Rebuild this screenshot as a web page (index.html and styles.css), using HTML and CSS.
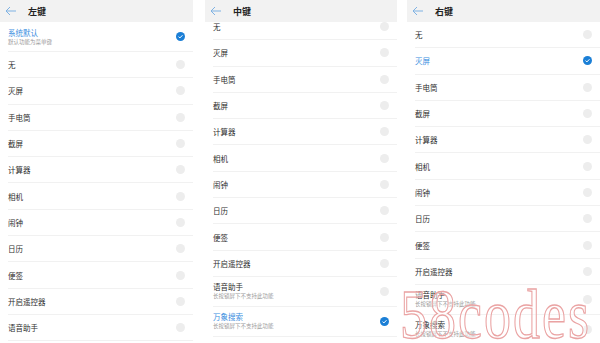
FILE: index.html
```html
<!DOCTYPE html>
<html lang="zh-CN">
  <head>
    <meta charset="UTF-8" />
    <meta name="viewport" content="width=device-width, initial-scale=1.0" />
    <title>按键设置</title>
    <link rel="stylesheet" href="styles.css">
  </head>
  <body>
    <div class="screens">
      <!-- 左键 -->
      <div class="panel panel-left">
        <div class="header">
          <svg class="back" viewBox="0 0 12 10" width="12" height="10">
            <path d="M11 5H1.5M5 1L1 5l4 4" fill="none" stroke="#7fb2e3" stroke-width="1" />
          </svg>
          <span class="title">左键</span>
        </div>
        <div class="list">
          <div class="row row-double">
            <div class="label">
              <span class="name selected">系统默认</span>
              <span class="desc">默认功能为菜单键</span>
            </div>
            <svg class="check" viewBox="0 0 10 10" width="9" height="9">
              <circle cx="5" cy="5" r="5" fill="#1b7fd6" />
              <path d="M2.8 5.1l1.5 1.5 2.9-3" fill="none" stroke="#fff" stroke-width="1.1" />
            </svg>
          </div>
          <div class="row"><span class="name">无</span><span class="radio"></span></div>
          <div class="row"><span class="name">灭屏</span><span class="radio"></span></div>
          <div class="row"><span class="name">手电筒</span><span class="radio"></span></div>
          <div class="row"><span class="name">截屏</span><span class="radio"></span></div>
          <div class="row"><span class="name">计算器</span><span class="radio"></span></div>
          <div class="row"><span class="name">相机</span><span class="radio"></span></div>
          <div class="row"><span class="name">闹钟</span><span class="radio"></span></div>
          <div class="row"><span class="name">日历</span><span class="radio"></span></div>
          <div class="row"><span class="name">便签</span><span class="radio"></span></div>
          <div class="row"><span class="name">开启遥控器</span><span class="radio"></span></div>
          <div class="row"><span class="name">语音助手</span><span class="radio"></span></div>
        </div>
      </div>

      <!-- 中键 -->
      <div class="panel panel-middle">
        <div class="header">
          <svg class="back" viewBox="0 0 12 10" width="12" height="10">
            <path d="M11 5H1.5M5 1L1 5l4 4" fill="none" stroke="#7fb2e3" stroke-width="1" />
          </svg>
          <span class="title">中键</span>
        </div>
        <div class="list list-scrolled">
          <div class="row"><span class="name">无</span><span class="radio"></span></div>
          <div class="row"><span class="name">灭屏</span><span class="radio"></span></div>
          <div class="row"><span class="name">手电筒</span><span class="radio"></span></div>
          <div class="row"><span class="name">截屏</span><span class="radio"></span></div>
          <div class="row"><span class="name">计算器</span><span class="radio"></span></div>
          <div class="row"><span class="name">相机</span><span class="radio"></span></div>
          <div class="row"><span class="name">闹钟</span><span class="radio"></span></div>
          <div class="row"><span class="name">日历</span><span class="radio"></span></div>
          <div class="row"><span class="name">便签</span><span class="radio"></span></div>
          <div class="row"><span class="name">开启遥控器</span><span class="radio"></span></div>
          <div class="row row-double">
            <div class="label">
              <span class="name">语音助手</span>
              <span class="desc">长按锁屏下不支持此功能</span>
            </div>
            <span class="radio"></span>
          </div>
          <div class="row row-double">
            <div class="label">
              <span class="name selected">万象搜索</span>
              <span class="desc">长按锁屏下不支持此功能</span>
            </div>
            <svg class="check" viewBox="0 0 10 10" width="9" height="9">
              <circle cx="5" cy="5" r="5" fill="#1b7fd6" />
              <path d="M2.8 5.1l1.5 1.5 2.9-3" fill="none" stroke="#fff" stroke-width="1.1" />
            </svg>
          </div>
        </div>
      </div>

      <!-- 右键 -->
      <div class="panel panel-right">
        <div class="header">
          <svg class="back" viewBox="0 0 12 10" width="12" height="10">
            <path d="M11 5H1.5M5 1L1 5l4 4" fill="none" stroke="#7fb2e3" stroke-width="1" />
          </svg>
          <span class="title">右键</span>
        </div>
        <div class="list">
          <div class="row"><span class="name">无</span><span class="radio"></span></div>
          <div class="row">
            <span class="name selected">灭屏</span>
            <svg class="check" viewBox="0 0 10 10" width="9" height="9">
              <circle cx="5" cy="5" r="5" fill="#1b7fd6" />
              <path d="M2.8 5.1l1.5 1.5 2.9-3" fill="none" stroke="#fff" stroke-width="1.1" />
            </svg>
          </div>
          <div class="row"><span class="name">手电筒</span><span class="radio"></span></div>
          <div class="row"><span class="name">截屏</span><span class="radio"></span></div>
          <div class="row"><span class="name">计算器</span><span class="radio"></span></div>
          <div class="row"><span class="name">相机</span><span class="radio"></span></div>
          <div class="row"><span class="name">闹钟</span><span class="radio"></span></div>
          <div class="row"><span class="name">日历</span><span class="radio"></span></div>
          <div class="row"><span class="name">便签</span><span class="radio"></span></div>
          <div class="row"><span class="name">开启遥控器</span><span class="radio"></span></div>
          <div class="row row-double">
            <div class="label">
              <span class="name">语音助手</span>
              <span class="desc">长按锁屏下不支持此功能</span>
            </div>
            <span class="radio"></span>
          </div>
          <div class="row row-double">
            <div class="label">
              <span class="name">万象搜索</span>
              <span class="desc">长按锁屏下不支持此功能</span>
            </div>
            <span class="radio"></span>
          </div>
        </div>
      </div>

      <div class="watermark">58codes</div>
    </div>
  </body>
</html>
```

FILE: styles.css
```css
body {
  margin: 0;
  background: #fff;
  font-family: "Noto Sans CJK SC", "Noto Sans", sans-serif;
  color: #333;
}

.screens {
  position: relative;
  display: flex;
  width: 600px;
  height: 343px;
  overflow: hidden;
}

.panel {
  height: 343px;
  overflow: hidden;
  background: #fff;
}

.panel-left {
  width: 193px;
}

.panel-middle {
  width: 192px;
  margin-left: 12px;
}

.panel-right {
  width: 193px;
  margin-left: 10px;
}

/* 顶部标题栏 */
.header {
  position: relative;
  z-index: 1;
  display: flex;
  align-items: center;
  height: 22px;
  padding-left: 5px;
  background: #f2f2f2;
  box-sizing: border-box;
}

.back {
  display: block;
}

.title {
  margin-left: 11px;
  font-size: 9px;
  font-weight: 700;
  color: #222;
}

/* 选项列表 */
.list {
  padding-left: 8px;
}

.list-scrolled {
  margin-top: -8px;
}

.row {
  display: flex;
  align-items: center;
  justify-content: space-between;
  height: 26.3px;
  padding-right: 8px;
  border-bottom: 1px solid #f1f1f1;
  box-sizing: border-box;
}

.row-double {
  height: 30px;
}

.label {
  display: flex;
  flex-direction: column;
}

.name {
  font-size: 7.5px;
  line-height: 11px;
  color: #2e2e2e;
}

.name.selected {
  color: #3a8ee0;
}

.desc {
  font-size: 5.5px;
  line-height: 9px;
  color: #9a9a9a;
}

.radio {
  width: 9px;
  height: 9px;
  border-radius: 50%;
  background: #ededed;
}

.check {
  display: block;
}

/* 角落水印 */
.watermark {
  position: absolute;
  left: 400px;
  top: 296px;
  font-family: "Liberation Serif", serif;
  font-size: 54px;
  line-height: 1;
  letter-spacing: 2px;
  color: rgba(255, 255, 255, 0.35);
  -webkit-text-stroke: 1px #eaa3a3;
  transform: scaleY(1.3);
  transform-origin: left bottom;
  white-space: nowrap;
  pointer-events: none;
}
```
